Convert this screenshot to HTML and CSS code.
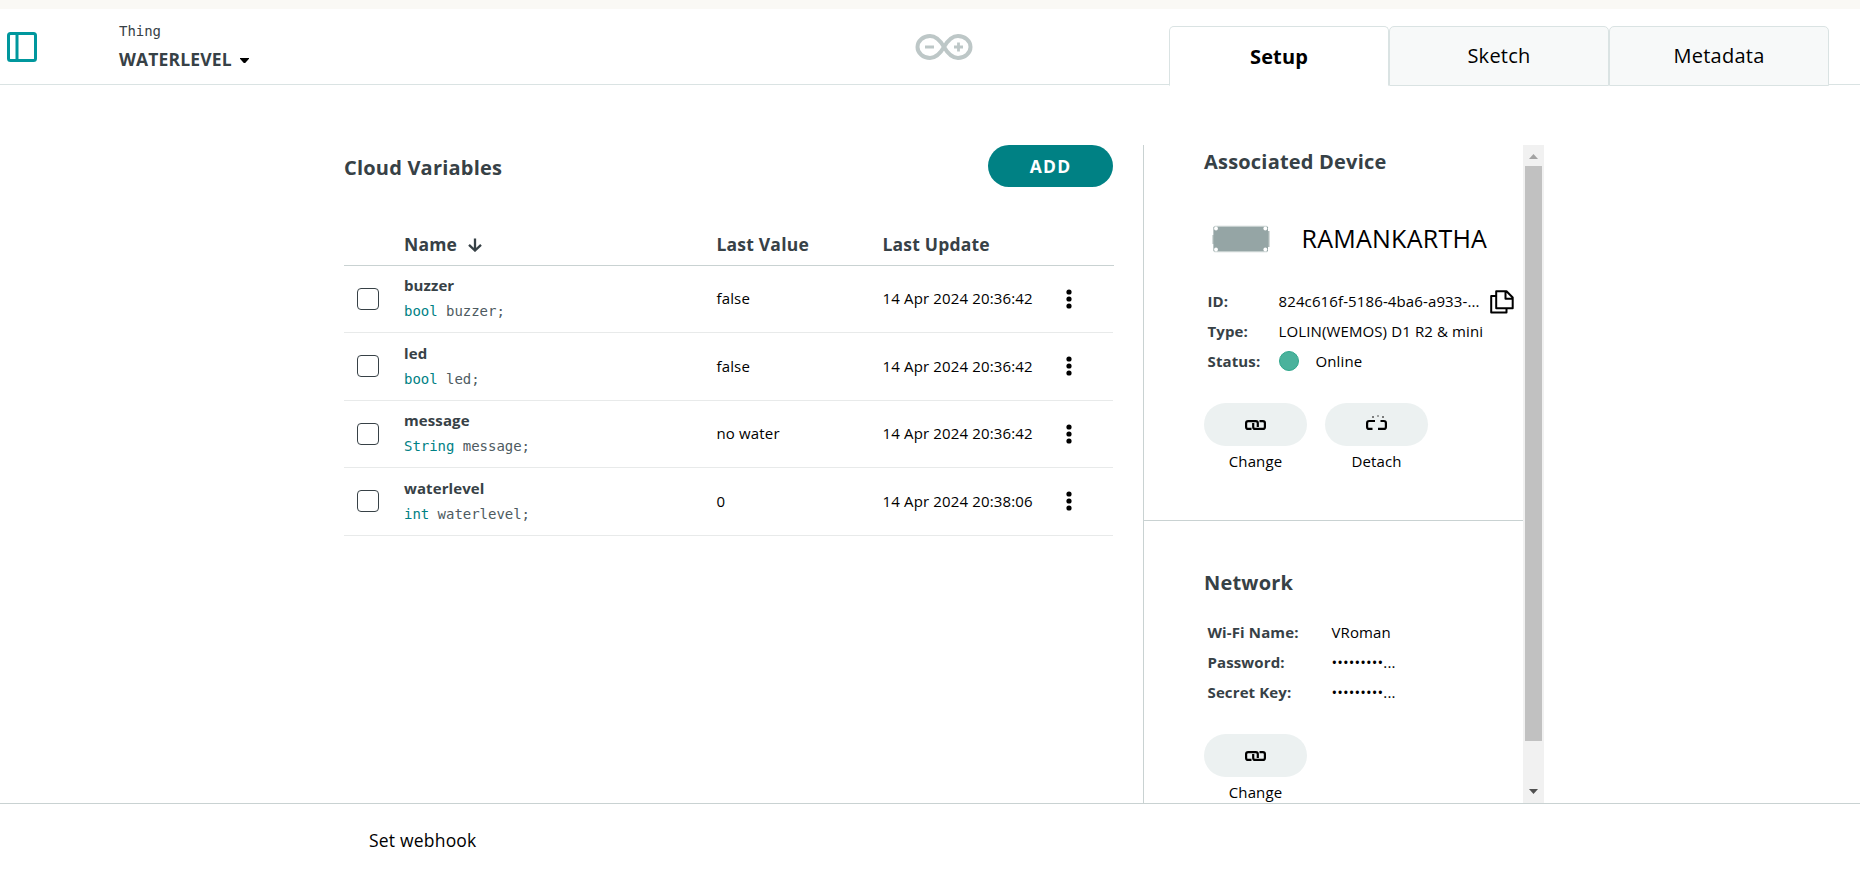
FILE: index.html
```html
<!DOCTYPE html>
<html lang="en">
<head>
<meta charset="utf-8">
<title>WATERLEVEL</title>
<link rel="stylesheet" href="styles.css">
</head>
<body>
<div class="strip"></div>
<header class="header">
  <svg class="sidebar-icon" width="30" height="30" viewBox="0 0 30 30" fill="none" stroke="#00979d"><rect x="1.5" y="1.5" width="27" height="27" rx="2" stroke-width="3"/><path d="M10 2v26" stroke-width="3"/></svg>
  <div class="thing">
    <div class="thing-label">Thing</div>
    <div class="thing-name"><span>WATERLEVEL</span><svg width="9" height="5" viewBox="0 0 9 5"><path d="M0 0h9v.8L5.2 5H3.8L0 .8z"/></svg></div>
  </div>
  <svg class="logo" width="58" height="28" viewBox="0 0 58 28" fill="none" stroke="#bdc7c7"><path d="M29 14C25 7 21 3 15 3a12.5 11 0 0 0 0 22c6 0 10-4 14-11S37 3 43 3a12.5 11 0 0 1 0 22c-6 0-10-4-14-11z" stroke-width="4"/><path d="M10 14h9M39 14h9M43.500 9.500v9" stroke-width="2.800"/></svg>
  <nav class="tabs">
    <a class="tab active">Setup</a>
    <a class="tab">Sketch</a>
    <a class="tab metadata">Metadata</a>
  </nav>
</header>
<main class="main">
  <section class="variables">
    <div class="section-head"><h2 class="title">Cloud Variables</h2><button class="add">ADD</button></div>
    <div class="row head">
      <span></span>
      <span class="sort">Name<svg width="14" height="14" viewBox="0 0 14 14" fill="none" stroke="#374146" stroke-width="2.300"><path d="M7 .5v12M1 6.800l6 5.700 6-5.700"/></svg></span>
      <span class="hv">Last Value</span><span class="hu">Last Update</span><span></span>
    </div>
    <div class="row item"><i class="check"></i><div class="variable"><div class="name">buzzer</div><div class="code"><b>bool</b> buzzer;</div></div><span class="val">false</span><span class="date">14 Apr 2024 20:36:42</span><svg class="dots" width="6" height="20" viewBox="0 0 6 20"><circle cx="3" cy="3" r="2.600"/><circle cx="3" cy="10" r="2.600"/><circle cx="3" cy="17" r="2.600"/></svg></div>
    <div class="row item"><i class="check"></i><div class="variable"><div class="name">led</div><div class="code"><b>bool</b> led;</div></div><span class="val">false</span><span class="date">14 Apr 2024 20:36:42</span><svg class="dots" width="6" height="20" viewBox="0 0 6 20"><circle cx="3" cy="3" r="2.600"/><circle cx="3" cy="10" r="2.600"/><circle cx="3" cy="17" r="2.600"/></svg></div>
    <div class="row item"><i class="check"></i><div class="variable"><div class="name">message</div><div class="code"><b>String</b> message;</div></div><span class="val">no water</span><span class="date">14 Apr 2024 20:36:42</span><svg class="dots" width="6" height="20" viewBox="0 0 6 20"><circle cx="3" cy="3" r="2.600"/><circle cx="3" cy="10" r="2.600"/><circle cx="3" cy="17" r="2.600"/></svg></div>
    <div class="row item"><i class="check"></i><div class="variable"><div class="name">waterlevel</div><div class="code"><b>int</b> waterlevel;</div></div><span class="val">0</span><span class="date">14 Apr 2024 20:38:06</span><svg class="dots" width="6" height="20" viewBox="0 0 6 20"><circle cx="3" cy="3" r="2.600"/><circle cx="3" cy="10" r="2.600"/><circle cx="3" cy="17" r="2.600"/></svg></div>
  </section>
  <aside class="side">
    <div class="panels">
      <section class="device">
        <h2 class="title">Associated Device</h2>
        <div class="board">
          <svg width="58" height="28" viewBox="0 0 58 28"><path d="M.5 10H3v9H.5zM54 6h3.500v16H54z" fill="#a9b6b5"/><rect x="1.500" y=".8" width="54.500" height="26.400" rx="1.500" fill="#c5cfce"/><rect x="1.500" y="2" width="54.500" height="24" fill="#95a5a5"/><g fill="#fff"><circle cx="4" cy="3.500" r="1.900"/><circle cx="53.300" cy="3.500" r="1.900"/><circle cx="4" cy="24.500" r="1.900"/><circle cx="53.300" cy="24.500" r="1.900"/></g></svg>
          <span class="board-name">RAMANKARTHA</span>
        </div>
        <dl class="info">
          <dt>ID:</dt><dd><span class="id">824c616f-5186-4ba6-a933-...</span><svg class="copy" width="24" height="24" viewBox="0 0 24 24" fill="none" stroke="#000" stroke-width="2" stroke-linejoin="round"><path d="M6 6H1.200v16.500h15.300V18.500M6.200 1.200h10.300l6.200 6.300v10.800H6.200zM15.500 1.200v7.500h7.200"/></svg></dd>
          <dt>Type:</dt><dd class="type">LOLIN(WEMOS) D1 R2 &amp; mini</dd>
          <dt>Status:</dt><dd><i class="online"></i>Online</dd>
        </dl>
        <div class="actions">
          <div class="action"><button class="pill"><svg width="21" height="10" viewBox="0 0 21 10" fill="none" stroke="#000" stroke-width="2.200"><path d="M6.500 8.900H3.200Q1.100 8.900 1.100 6.900V3.100Q1.100 1.100 3.200 1.100h7.600q2 0 2 2V7M8.200 3v3.900q0 2 2 2h7.600q2.100 0 2.100-2V3.100q0-2-2.100-2h-3.300"/></svg></button><span>Change</span></div>
          <div class="action"><button class="pill detach"><svg width="21" height="16" viewBox="0 0 21 16" fill="none" stroke="#000" stroke-width="2.200"><path d="M9 7H3.200Q1.100 7 1.100 9v3.900q0 2 2.100 2h3.300M14.500 7h3.300q2.100 0 2.100 2v3.900q0 2-2.100 2H12"/><path d="M6 3h2M7 2v2M12 1v2M16 3h2M17 2v2" stroke-width="1" stroke="#555"/></svg></button><span>Detach</span></div>
        </div>
      </section>
      <section class="network">
        <h2 class="title">Network</h2>
        <dl class="info wide">
          <dt>Wi-Fi Name:</dt><dd>VRoman</dd>
          <dt>Password:</dt><dd class="secret">•••••••••...</dd>
          <dt>Secret Key:</dt><dd class="secret">•••••••••...</dd>
        </dl>
        <div class="actions">
          <div class="action"><button class="pill"><svg width="21" height="10" viewBox="0 0 21 10" fill="none" stroke="#000" stroke-width="2.200"><path d="M6.500 8.900H3.200Q1.100 8.900 1.100 6.900V3.100Q1.100 1.100 3.200 1.100h7.600q2 0 2 2V7M8.200 3v3.900q0 2 2 2h7.600q2.100 0 2.100-2V3.100q0-2-2.100-2h-3.300"/></svg></button><span>Change</span></div>
        </div>
      </section>
    </div>
    <div class="scrollbar">
      <svg width="21" height="21" viewBox="0 0 21 21"><path d="M6 14l4.500-5 4.500 5z" fill="#a3a3a3"/></svg>
      <div class="thumb"></div>
      <svg width="21" height="21" viewBox="0 0 21 21"><path d="M6 7l4.500 5L15 7z" fill="#505050"/></svg>
    </div>
  </aside>
</main>
<footer class="footer"><a class="webhook">Set webhook</a></footer>
</body>
</html>
```
FILE: styles.css
```css
* { box-sizing: border-box; }
body { margin: 0; width: 1860px; height: 875px; overflow: hidden; background: #fff; color: #000; font: 15px/20px "Open Sans", sans-serif; display: flex; flex-direction: column; white-space: nowrap; }
svg { display: block; flex: none; }
h2, dl, dd { margin: 0; }
button { border: 0; padding: 0; font: inherit; }
.strip { height: 9px; flex: none; background: #faf9f5; }
.header { height: 76px; flex: none; display: flex; border-bottom: 1px solid #dae3e3; padding-left: 7px; }
.sidebar-icon { margin-top: 23px; }
.thing { margin: 12px 0 0 82px; width: 796px; color: #374146; }
.thing-label { font: 14px/20px "DejaVu Sans Mono", monospace; letter-spacing: -.03px; }
.thing-name { display: flex; align-items: center; font-weight: 700; font-size: 17.5px; line-height: 24px; margin-top: 6px; gap: 8px; letter-spacing: .15px; }
.thing-name svg { fill: #000; margin-top: 2px; }
.logo { margin-top: 24px; width: 58px; }
.tabs { display: flex; margin: 17px 0 -2px 196px; height: 60px; }
.tab { width: 220px; height: 60px; border: 1px solid #dae3e3; border-radius: 5px 5px 0 0; background: #f7f9f9; font-size: 20px; line-height: 57px; text-align: center; letter-spacing: .25px; }
.tab.active { background: #fff; border-bottom-color: #fff; font-weight: 700; line-height: 60px; letter-spacing: .1px; }
.main { height: 718px; flex: none; padding: 60px 0 0 344px; display: flex; }
.variables { width: 770px; }
.title { font-size: 20px; line-height: 28px; font-weight: 700; color: #374146; letter-spacing: .2px; }
.section-head { display: flex; justify-content: space-between; padding-right: 1px; height: 74px; }
.section-head .title { padding-top: 9px; }
.add { width: 125px; height: 42px; border-radius: 21px; background: #008184; color: #fff; font-size: 17.5px; font-weight: 700; letter-spacing: 1.2px; }
.row { display: grid; grid-template-columns: 60px 312.5px 166px 180px 40px; align-items: center; border-bottom: 1px solid #e8eaea; }
.head { height: 46.6px; color: #374146; font-size: 17.5px; font-weight: 700; border-color: #c9d2d2; padding-top: 5px; letter-spacing: .2px; }
.sort { display: flex; align-items: center; gap: 11px; }
.sort svg { margin-top: 1px; }
.item { height: 67.5px; margin-right: 1px; }
.check { width: 22px; height: 22px; margin-left: 13px; border: 1px solid #374146; border-radius: 4px; }
.variable { padding-bottom: 2px; }
.name { font-size: 15px; font-weight: 700; color: #374146; line-height: 22px; letter-spacing: .1px; }
.code { font: 14px/20px "DejaVu Sans Mono", monospace; letter-spacing: -.03px; color: #4e5b61; margin-top: 5px; }
.code b { font-weight: 400; color: #008184; }
.val, .date { letter-spacing: .15px; padding-bottom: 1.5px; }
.dots { margin-left: 3px; }
.side { margin-left: 29px; display: flex; width: 401px; height: 658px; border-left: 1px solid #c9d2d2; }
.panels { width: 379px; height: 658px; overflow: hidden; }
.device { height: 376px; border-bottom: 1px solid #c9d2d2; padding: 3px 0 0 60px; }
.network { padding: 48px 0 0 60px; }
.board { display: flex; align-items: center; height: 34px; margin: 46px 0 30px 8px; }
.board-name { font-size: 25px; margin-left: 31.5px; line-height: 32px; padding-bottom: 2px; letter-spacing: .25px; }
.info { display: grid; grid-template-columns: 71px 1fr; grid-auto-rows: 30px; line-height: 30px; margin-left: 3.5px; letter-spacing: .12px; }
.info.wide { grid-template-columns: 124px 1fr; margin-top: 20px; }
.info dt { font-weight: 700; color: #374146; }
.info dd { display: flex; align-items: center; }
.copy { margin: 2px 0 0 10px; }
.online { width: 20px; height: 20px; border-radius: 50%; background: #4ab29c; border: 1px solid #2fa78c; margin-right: 17px; }
.actions { display: flex; gap: 18px; margin-top: 27px; }
.action { width: 103px; text-align: center; letter-spacing: .1px; }
.action span { display: block; margin-top: 5px; }
.pill { width: 103px; height: 43px; border-radius: 22px; background: #ecf1f1; display: flex; align-items: center; justify-content: center; }
.detach { padding-bottom: 6px; }
.scrollbar { width: 21px; height: 658px; background: #f1f1f1; }
.thumb { width: 17px; height: 575px; margin: 0 0 41px 2px; background: #c1c1c1; }
.footer { flex: 1; border-top: 1px solid #c9d2d2; padding: 24px 0 0 369px; font-size: 17.5px; line-height: 24px; letter-spacing: .2px; }
```
